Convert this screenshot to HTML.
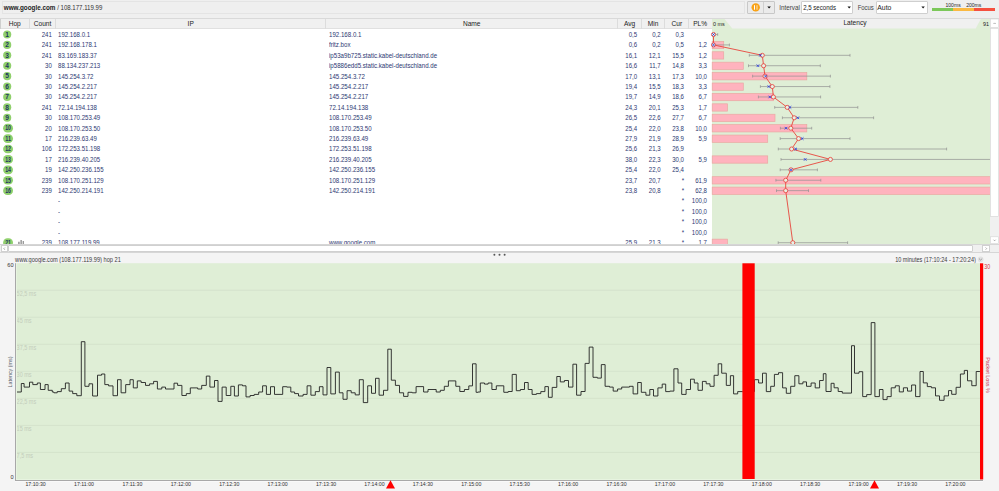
<!DOCTYPE html>
<html><head><meta charset="utf-8"><style>
*{margin:0;padding:0;box-sizing:border-box}
html,body{width:999px;height:491px;overflow:hidden;background:#f4f4f4;font-family:"Liberation Sans",sans-serif}
.a{position:absolute;white-space:nowrap}
.t{font-size:6.4px;color:#2c3872;line-height:10px}
.l{transform:scaleX(0.95);transform-origin:0 0}
.r{transform:scaleX(0.95);transform-origin:100% 0}
.h{font-size:6.6px;color:#222;line-height:10px}
</style></head>
<body>
<div class="a" style="left:0;top:0;width:999px;height:18px;background:#efefef"></div>
<div class="a" style="left:2.2px;top:1.3px;width:743px;height:12.3px;background:#efefef;border:1px solid #e4e4e4"></div>
<div class="a" style="left:747px;top:1.3px;width:28px;height:12.3px;background:#ebebeb;border:1px solid #c8c8c8;border-radius:1px"></div>
<div class="a" style="left:763px;top:1.8px;width:1px;height:11.3px;background:#d0d0d0"></div>
<svg class="a" style="left:0;top:0" width="999" height="18"><circle cx="755.7" cy="7.4" r="4.2" fill="#f9a215"/><rect x="754" y="5.2" width="1" height="4.5" fill="#fff"/><rect x="756.5" y="5.2" width="1" height="4.5" fill="#fbe3c0"/><path d="M767.3 6.4h3.6l-1.8 2.2z" fill="#111"/></svg>
<div class="a" style="left:801px;top:1.3px;width:52.4px;height:12.4px;background:#fff;border:1px solid #cfcfcf;border-radius:1px"></div>
<div class="a" style="left:875.5px;top:1.3px;width:52.5px;height:12.4px;background:#fff;border:1px solid #cfcfcf;border-radius:1px"></div>
<svg class="a" style="left:0;top:0" width="999" height="18"><path d="M847.5 6.4h3.4l-1.7 2.1z" fill="#111"/><path d="M921.4 6.4h3.4l-1.7 2.1z" fill="#111"/></svg>
<div class="a" style="left:932px;top:8px;width:21px;height:3px;background:#7cc85a"></div>
<div class="a" style="left:953px;top:8px;width:21px;height:3px;background:#fbb942"></div>
<div class="a" style="left:974px;top:8px;width:21px;height:3px;background:#f5503f"></div>
<div class="a" style="left:0;top:18.2px;width:999px;height:226.5px;background:#fff;border-top:1px solid #d9d9d9"></div>
<div class="a" style="left:0;top:19px;width:990px;height:9.6px;background:#f0f0f0;border-bottom:1px solid #e0e0e0"></div>
<div class="a" style="left:28.9px;top:19px;width:1px;height:9.6px;background:#dcdcdc"></div>
<div class="a" style="left:54.6px;top:19px;width:1px;height:9.6px;background:#dcdcdc"></div>
<div class="a" style="left:325.3px;top:19px;width:1px;height:9.6px;background:#dcdcdc"></div>
<div class="a" style="left:617.1px;top:19px;width:1px;height:9.6px;background:#dcdcdc"></div>
<div class="a" style="left:641.1px;top:19px;width:1px;height:9.6px;background:#dcdcdc"></div>
<div class="a" style="left:664.2px;top:19px;width:1px;height:9.6px;background:#dcdcdc"></div>
<div class="a" style="left:688.4px;top:19px;width:1px;height:9.6px;background:#dcdcdc"></div>
<div class="a" style="left:0;top:19px;width:1px;height:9.6px;background:#cfcfcf"></div>
<div class="a h" style="left:0px;top:18.8px;width:29.5px;text-align:center">Hop</div>
<div class="a h" style="left:29.5px;top:18.8px;width:26.1px;text-align:center">Count</div>
<div class="a h" style="left:55.6px;top:18.8px;width:270.2px;text-align:center">IP</div>
<div class="a h" style="left:325.8px;top:18.8px;width:291.8px;text-align:center">Name</div>
<div class="a h" style="left:617.6px;top:18.8px;width:24.0px;text-align:center">Avg</div>
<div class="a h" style="left:641.6px;top:18.8px;width:23.100000000000023px;text-align:center">Min</div>
<div class="a h" style="left:664.7px;top:18.8px;width:24.199999999999932px;text-align:center">Cur</div>
<div class="a h" style="left:688.9px;top:18.8px;width:22.600000000000023px;text-align:center">PL%</div>
<div class="a" style="left:711.8px;top:19px;width:278.2px;height:224.5px;background:#dfeed6"></div>
<svg class="a" style="left:0;top:0" width="999" height="30"><path d="M724.5 19H980.8L975.7 28.6H732.3Z" fill="#f0f0f0"/></svg>
<div class="a h" style="left:713px;top:19.4px;font-size:5.4px">0 ms</div>
<div class="a h" style="left:805px;top:18.3px;width:100px;text-align:center">Latency</div>
<div class="a h" style="left:983px;top:19.4px;font-size:5.4px">91</div>
<div class="a t r" style="left:0;top:29.90px;width:51.8px;text-align:right">241</div>
<div class="a t l" style="left:58.2px;top:29.90px">192.168.0.1</div>
<div class="a t l" style="left:328.9px;top:29.90px;transform:scaleX(0.96)">192.168.0.1</div>
<div class="a t r" style="left:600px;top:29.90px;width:37.2px;text-align:right">0,5</div>
<div class="a t r" style="left:620px;top:29.90px;width:40.6px;text-align:right">0,2</div>
<div class="a t r" style="left:640px;top:29.90px;width:44px;text-align:right">0,3</div>
<div class="a t r" style="left:660px;top:29.90px;width:47px;text-align:right"></div>
<div class="a t r" style="left:0;top:40.31px;width:51.8px;text-align:right">241</div>
<div class="a t l" style="left:58.2px;top:40.31px">192.168.178.1</div>
<div class="a t l" style="left:328.9px;top:40.31px;transform:scaleX(0.96)">fritz.box</div>
<div class="a t r" style="left:600px;top:40.31px;width:37.2px;text-align:right">0,6</div>
<div class="a t r" style="left:620px;top:40.31px;width:40.6px;text-align:right">0,2</div>
<div class="a t r" style="left:640px;top:40.31px;width:44px;text-align:right">0,5</div>
<div class="a t r" style="left:660px;top:40.31px;width:47px;text-align:right">1,2</div>
<div class="a t r" style="left:0;top:50.72px;width:51.8px;text-align:right">241</div>
<div class="a t l" style="left:58.2px;top:50.72px">83.169.183.37</div>
<div class="a t l" style="left:328.9px;top:50.72px;transform:scaleX(0.96)">ip53a9b725.static.kabel-deutschland.de</div>
<div class="a t r" style="left:600px;top:50.72px;width:37.2px;text-align:right">16,1</div>
<div class="a t r" style="left:620px;top:50.72px;width:40.6px;text-align:right">12,1</div>
<div class="a t r" style="left:640px;top:50.72px;width:44px;text-align:right">15,5</div>
<div class="a t r" style="left:660px;top:50.72px;width:47px;text-align:right">1,2</div>
<div class="a t r" style="left:0;top:61.13px;width:51.8px;text-align:right">30</div>
<div class="a t l" style="left:58.2px;top:61.13px">88.134.237.213</div>
<div class="a t l" style="left:328.9px;top:61.13px;transform:scaleX(0.96)">ip5886edd5.static.kabel-deutschland.de</div>
<div class="a t r" style="left:600px;top:61.13px;width:37.2px;text-align:right">16,6</div>
<div class="a t r" style="left:620px;top:61.13px;width:40.6px;text-align:right">11,7</div>
<div class="a t r" style="left:640px;top:61.13px;width:44px;text-align:right">14,8</div>
<div class="a t r" style="left:660px;top:61.13px;width:47px;text-align:right">3,3</div>
<div class="a t r" style="left:0;top:71.54px;width:51.8px;text-align:right">30</div>
<div class="a t l" style="left:58.2px;top:71.54px">145.254.3.72</div>
<div class="a t l" style="left:328.9px;top:71.54px;transform:scaleX(0.96)">145.254.3.72</div>
<div class="a t r" style="left:600px;top:71.54px;width:37.2px;text-align:right">17,0</div>
<div class="a t r" style="left:620px;top:71.54px;width:40.6px;text-align:right">13,1</div>
<div class="a t r" style="left:640px;top:71.54px;width:44px;text-align:right">17,3</div>
<div class="a t r" style="left:660px;top:71.54px;width:47px;text-align:right">10,0</div>
<div class="a t r" style="left:0;top:81.95px;width:51.8px;text-align:right">30</div>
<div class="a t l" style="left:58.2px;top:81.95px">145.254.2.217</div>
<div class="a t l" style="left:328.9px;top:81.95px;transform:scaleX(0.96)">145.254.2.217</div>
<div class="a t r" style="left:600px;top:81.95px;width:37.2px;text-align:right">19,4</div>
<div class="a t r" style="left:620px;top:81.95px;width:40.6px;text-align:right">15,5</div>
<div class="a t r" style="left:640px;top:81.95px;width:44px;text-align:right">18,3</div>
<div class="a t r" style="left:660px;top:81.95px;width:47px;text-align:right">3,3</div>
<div class="a t r" style="left:0;top:92.36px;width:51.8px;text-align:right">30</div>
<div class="a t l" style="left:58.2px;top:92.36px">145.254.2.217</div>
<div class="a t l" style="left:328.9px;top:92.36px;transform:scaleX(0.96)">145.254.2.217</div>
<div class="a t r" style="left:600px;top:92.36px;width:37.2px;text-align:right">19,7</div>
<div class="a t r" style="left:620px;top:92.36px;width:40.6px;text-align:right">14,9</div>
<div class="a t r" style="left:640px;top:92.36px;width:44px;text-align:right">18,6</div>
<div class="a t r" style="left:660px;top:92.36px;width:47px;text-align:right">6,7</div>
<div class="a t r" style="left:0;top:102.77px;width:51.8px;text-align:right">241</div>
<div class="a t l" style="left:58.2px;top:102.77px">72.14.194.138</div>
<div class="a t l" style="left:328.9px;top:102.77px;transform:scaleX(0.96)">72.14.194.138</div>
<div class="a t r" style="left:600px;top:102.77px;width:37.2px;text-align:right">24,3</div>
<div class="a t r" style="left:620px;top:102.77px;width:40.6px;text-align:right">20,1</div>
<div class="a t r" style="left:640px;top:102.77px;width:44px;text-align:right">25,3</div>
<div class="a t r" style="left:660px;top:102.77px;width:47px;text-align:right">1,7</div>
<div class="a t r" style="left:0;top:113.18px;width:51.8px;text-align:right">30</div>
<div class="a t l" style="left:58.2px;top:113.18px">108.170.253.49</div>
<div class="a t l" style="left:328.9px;top:113.18px;transform:scaleX(0.96)">108.170.253.49</div>
<div class="a t r" style="left:600px;top:113.18px;width:37.2px;text-align:right">26,5</div>
<div class="a t r" style="left:620px;top:113.18px;width:40.6px;text-align:right">22,6</div>
<div class="a t r" style="left:640px;top:113.18px;width:44px;text-align:right">27,7</div>
<div class="a t r" style="left:660px;top:113.18px;width:47px;text-align:right">6,7</div>
<div class="a t r" style="left:0;top:123.59px;width:51.8px;text-align:right">20</div>
<div class="a t l" style="left:58.2px;top:123.59px">108.170.253.50</div>
<div class="a t l" style="left:328.9px;top:123.59px;transform:scaleX(0.96)">108.170.253.50</div>
<div class="a t r" style="left:600px;top:123.59px;width:37.2px;text-align:right">25,4</div>
<div class="a t r" style="left:620px;top:123.59px;width:40.6px;text-align:right">22,0</div>
<div class="a t r" style="left:640px;top:123.59px;width:44px;text-align:right">23,8</div>
<div class="a t r" style="left:660px;top:123.59px;width:47px;text-align:right">10,0</div>
<div class="a t r" style="left:0;top:134.00px;width:51.8px;text-align:right">17</div>
<div class="a t l" style="left:58.2px;top:134.00px">216.239.63.49</div>
<div class="a t l" style="left:328.9px;top:134.00px;transform:scaleX(0.96)">216.239.63.49</div>
<div class="a t r" style="left:600px;top:134.00px;width:37.2px;text-align:right">27,9</div>
<div class="a t r" style="left:620px;top:134.00px;width:40.6px;text-align:right">21,9</div>
<div class="a t r" style="left:640px;top:134.00px;width:44px;text-align:right">28,9</div>
<div class="a t r" style="left:660px;top:134.00px;width:47px;text-align:right">5,9</div>
<div class="a t r" style="left:0;top:144.41px;width:51.8px;text-align:right">106</div>
<div class="a t l" style="left:58.2px;top:144.41px">172.253.51.198</div>
<div class="a t l" style="left:328.9px;top:144.41px;transform:scaleX(0.96)">172.253.51.198</div>
<div class="a t r" style="left:600px;top:144.41px;width:37.2px;text-align:right">25,6</div>
<div class="a t r" style="left:620px;top:144.41px;width:40.6px;text-align:right">21,3</div>
<div class="a t r" style="left:640px;top:144.41px;width:44px;text-align:right">26,9</div>
<div class="a t r" style="left:660px;top:144.41px;width:47px;text-align:right"></div>
<div class="a t r" style="left:0;top:154.82px;width:51.8px;text-align:right">17</div>
<div class="a t l" style="left:58.2px;top:154.82px">216.239.40.205</div>
<div class="a t l" style="left:328.9px;top:154.82px;transform:scaleX(0.96)">216.239.40.205</div>
<div class="a t r" style="left:600px;top:154.82px;width:37.2px;text-align:right">38,0</div>
<div class="a t r" style="left:620px;top:154.82px;width:40.6px;text-align:right">22,3</div>
<div class="a t r" style="left:640px;top:154.82px;width:44px;text-align:right">30,0</div>
<div class="a t r" style="left:660px;top:154.82px;width:47px;text-align:right">5,9</div>
<div class="a t r" style="left:0;top:165.23px;width:51.8px;text-align:right">19</div>
<div class="a t l" style="left:58.2px;top:165.23px">142.250.236.155</div>
<div class="a t l" style="left:328.9px;top:165.23px;transform:scaleX(0.96)">142.250.236.155</div>
<div class="a t r" style="left:600px;top:165.23px;width:37.2px;text-align:right">25,4</div>
<div class="a t r" style="left:620px;top:165.23px;width:40.6px;text-align:right">22,0</div>
<div class="a t r" style="left:640px;top:165.23px;width:44px;text-align:right">25,4</div>
<div class="a t r" style="left:660px;top:165.23px;width:47px;text-align:right"></div>
<div class="a t r" style="left:0;top:175.64px;width:51.8px;text-align:right">239</div>
<div class="a t l" style="left:58.2px;top:175.64px">108.170.251.129</div>
<div class="a t l" style="left:328.9px;top:175.64px;transform:scaleX(0.96)">108.170.251.129</div>
<div class="a t r" style="left:600px;top:175.64px;width:37.2px;text-align:right">23,7</div>
<div class="a t r" style="left:620px;top:175.64px;width:40.6px;text-align:right">20,7</div>
<div class="a t r" style="left:640px;top:175.64px;width:44px;text-align:right">*</div>
<div class="a t r" style="left:660px;top:175.64px;width:47px;text-align:right">61,9</div>
<div class="a t r" style="left:0;top:186.05px;width:51.8px;text-align:right">239</div>
<div class="a t l" style="left:58.2px;top:186.05px">142.250.214.191</div>
<div class="a t l" style="left:328.9px;top:186.05px;transform:scaleX(0.96)">142.250.214.191</div>
<div class="a t r" style="left:600px;top:186.05px;width:37.2px;text-align:right">23,8</div>
<div class="a t r" style="left:620px;top:186.05px;width:40.6px;text-align:right">20,8</div>
<div class="a t r" style="left:640px;top:186.05px;width:44px;text-align:right">*</div>
<div class="a t r" style="left:660px;top:186.05px;width:47px;text-align:right">62,8</div>
<div class="a t r" style="left:0;top:196.46px;width:51.8px;text-align:right"></div>
<div class="a t l" style="left:58.2px;top:196.46px">-</div>
<div class="a t l" style="left:328.9px;top:196.46px;transform:scaleX(0.96)"></div>
<div class="a t r" style="left:600px;top:196.46px;width:37.2px;text-align:right"></div>
<div class="a t r" style="left:620px;top:196.46px;width:40.6px;text-align:right"></div>
<div class="a t r" style="left:640px;top:196.46px;width:44px;text-align:right">*</div>
<div class="a t r" style="left:660px;top:196.46px;width:47px;text-align:right">100,0</div>
<div class="a t r" style="left:0;top:206.87px;width:51.8px;text-align:right"></div>
<div class="a t l" style="left:58.2px;top:206.87px">-</div>
<div class="a t l" style="left:328.9px;top:206.87px;transform:scaleX(0.96)"></div>
<div class="a t r" style="left:600px;top:206.87px;width:37.2px;text-align:right"></div>
<div class="a t r" style="left:620px;top:206.87px;width:40.6px;text-align:right"></div>
<div class="a t r" style="left:640px;top:206.87px;width:44px;text-align:right">*</div>
<div class="a t r" style="left:660px;top:206.87px;width:47px;text-align:right">100,0</div>
<div class="a t r" style="left:0;top:217.28px;width:51.8px;text-align:right"></div>
<div class="a t l" style="left:58.2px;top:217.28px">-</div>
<div class="a t l" style="left:328.9px;top:217.28px;transform:scaleX(0.96)"></div>
<div class="a t r" style="left:600px;top:217.28px;width:37.2px;text-align:right"></div>
<div class="a t r" style="left:620px;top:217.28px;width:40.6px;text-align:right"></div>
<div class="a t r" style="left:640px;top:217.28px;width:44px;text-align:right">*</div>
<div class="a t r" style="left:660px;top:217.28px;width:47px;text-align:right">100,0</div>
<div class="a t r" style="left:0;top:227.69px;width:51.8px;text-align:right"></div>
<div class="a t l" style="left:58.2px;top:227.69px">-</div>
<div class="a t l" style="left:328.9px;top:227.69px;transform:scaleX(0.96)"></div>
<div class="a t r" style="left:600px;top:227.69px;width:37.2px;text-align:right"></div>
<div class="a t r" style="left:620px;top:227.69px;width:40.6px;text-align:right"></div>
<div class="a t r" style="left:640px;top:227.69px;width:44px;text-align:right">*</div>
<div class="a t r" style="left:660px;top:227.69px;width:47px;text-align:right">100,0</div>
<div class="a t r" style="left:0;top:238.10px;width:51.8px;text-align:right">239</div>
<div class="a t l" style="left:58.2px;top:238.10px">108.177.119.99</div>
<div class="a t l" style="left:328.9px;top:238.10px;transform:scaleX(0.96)">www.google.com</div>
<div class="a t r" style="left:600px;top:238.10px;width:37.2px;text-align:right">25,9</div>
<div class="a t r" style="left:620px;top:238.10px;width:40.6px;text-align:right">21,3</div>
<div class="a t r" style="left:640px;top:238.10px;width:44px;text-align:right">*</div>
<div class="a t r" style="left:660px;top:238.10px;width:47px;text-align:right">1,7</div>
<svg class="a" style="left:0;top:0" width="999" height="245" font-family="Liberation Sans"><defs><clipPath id="tc"><rect x="0" y="28.6" width="999" height="215.9"/></clipPath></defs><g clip-path="url(#tc)"><circle cx="7.2" cy="34.50" r="4.05" fill="#90d06c"/><text x="7.2" y="36.80" font-size="6.6" font-weight="bold" text-anchor="middle" fill="#1e3560">1</text><circle cx="7.2" cy="44.91" r="4.05" fill="#90d06c"/><text x="7.2" y="47.21" font-size="6.6" font-weight="bold" text-anchor="middle" fill="#1e3560">2</text><circle cx="7.2" cy="55.32" r="4.05" fill="#90d06c"/><text x="7.2" y="57.62" font-size="6.6" font-weight="bold" text-anchor="middle" fill="#1e3560">3</text><circle cx="7.2" cy="65.73" r="4.05" fill="#90d06c"/><text x="7.2" y="68.03" font-size="6.6" font-weight="bold" text-anchor="middle" fill="#1e3560">4</text><circle cx="7.2" cy="76.14" r="4.05" fill="#90d06c"/><text x="7.2" y="78.44" font-size="6.6" font-weight="bold" text-anchor="middle" fill="#1e3560">5</text><circle cx="7.2" cy="86.55" r="4.05" fill="#90d06c"/><text x="7.2" y="88.85" font-size="6.6" font-weight="bold" text-anchor="middle" fill="#1e3560">6</text><circle cx="7.2" cy="96.96" r="4.05" fill="#90d06c"/><text x="7.2" y="99.26" font-size="6.6" font-weight="bold" text-anchor="middle" fill="#1e3560">7</text><circle cx="7.2" cy="107.37" r="4.05" fill="#90d06c"/><text x="7.2" y="109.67" font-size="6.6" font-weight="bold" text-anchor="middle" fill="#1e3560">8</text><circle cx="7.2" cy="117.78" r="4.05" fill="#90d06c"/><text x="7.2" y="120.08" font-size="6.6" font-weight="bold" text-anchor="middle" fill="#1e3560">9</text><rect x="3.1" y="123.84" width="9.9" height="8.7" rx="4.35" fill="#90d06c"/><text x="8.05" y="130.49" font-size="6.6" font-weight="bold" text-anchor="middle" fill="#1e3560" textLength="5.8" lengthAdjust="spacingAndGlyphs">10</text><rect x="3.1" y="134.25" width="9.9" height="8.7" rx="4.35" fill="#90d06c"/><text x="8.05" y="140.90" font-size="6.6" font-weight="bold" text-anchor="middle" fill="#1e3560" textLength="5.8" lengthAdjust="spacingAndGlyphs">11</text><rect x="3.1" y="144.66" width="9.9" height="8.7" rx="4.35" fill="#90d06c"/><text x="8.05" y="151.31" font-size="6.6" font-weight="bold" text-anchor="middle" fill="#1e3560" textLength="5.8" lengthAdjust="spacingAndGlyphs">12</text><rect x="3.1" y="155.07" width="9.9" height="8.7" rx="4.35" fill="#90d06c"/><text x="8.05" y="161.72" font-size="6.6" font-weight="bold" text-anchor="middle" fill="#1e3560" textLength="5.8" lengthAdjust="spacingAndGlyphs">13</text><rect x="3.1" y="165.48" width="9.9" height="8.7" rx="4.35" fill="#90d06c"/><text x="8.05" y="172.13" font-size="6.6" font-weight="bold" text-anchor="middle" fill="#1e3560" textLength="5.8" lengthAdjust="spacingAndGlyphs">14</text><rect x="3.1" y="175.89" width="9.9" height="8.7" rx="4.35" fill="#90d06c"/><text x="8.05" y="182.54" font-size="6.6" font-weight="bold" text-anchor="middle" fill="#1e3560" textLength="5.8" lengthAdjust="spacingAndGlyphs">15</text><rect x="3.1" y="186.30" width="9.9" height="8.7" rx="4.35" fill="#90d06c"/><text x="8.05" y="192.95" font-size="6.6" font-weight="bold" text-anchor="middle" fill="#1e3560" textLength="5.8" lengthAdjust="spacingAndGlyphs">16</text><rect x="3.1" y="238.35" width="9.9" height="8.7" rx="4.35" fill="#90d06c"/><text x="8.05" y="245.00" font-size="6.6" font-weight="bold" text-anchor="middle" fill="#1e3560" textLength="5.8" lengthAdjust="spacingAndGlyphs">21</text><rect x="712.2" y="41.36" width="11.50" height="7.3" fill="#ffb3be" stroke="#eaa8a2" stroke-width="0.7"/><rect x="712.2" y="51.77" width="11.50" height="7.3" fill="#ffb3be" stroke="#eaa8a2" stroke-width="0.7"/><rect x="712.2" y="62.18" width="31.10" height="7.3" fill="#ffb3be" stroke="#eaa8a2" stroke-width="0.7"/><rect x="712.2" y="72.59" width="94.60" height="7.3" fill="#ffb3be" stroke="#eaa8a2" stroke-width="0.7"/><rect x="712.2" y="83.00" width="31.10" height="7.3" fill="#ffb3be" stroke="#eaa8a2" stroke-width="0.7"/><rect x="712.2" y="93.41" width="61.20" height="7.3" fill="#ffb3be" stroke="#eaa8a2" stroke-width="0.7"/><rect x="712.2" y="103.82" width="15.30" height="7.3" fill="#ffb3be" stroke="#eaa8a2" stroke-width="0.7"/><rect x="712.2" y="114.23" width="62.80" height="7.3" fill="#ffb3be" stroke="#eaa8a2" stroke-width="0.7"/><rect x="712.2" y="124.64" width="94.60" height="7.3" fill="#ffb3be" stroke="#eaa8a2" stroke-width="0.7"/><rect x="712.2" y="135.05" width="55.50" height="7.3" fill="#ffb3be" stroke="#eaa8a2" stroke-width="0.7"/><rect x="712.2" y="155.87" width="55.50" height="7.3" fill="#ffb3be" stroke="#eaa8a2" stroke-width="0.7"/><rect x="712.2" y="176.69" width="282.80" height="7.3" fill="#ffb3be" stroke="#eaa8a2" stroke-width="0.7"/><rect x="712.2" y="187.10" width="282.80" height="7.3" fill="#ffb3be" stroke="#eaa8a2" stroke-width="0.7"/><rect x="712.2" y="239.15" width="15.20" height="7.3" fill="#ffb3be" stroke="#eaa8a2" stroke-width="0.7"/><path d="M713.0 34.50H717.7M713.0 33.10V35.90M717.7 33.10V35.90" stroke="#909090" stroke-width="0.7" fill="none"/><path d="M713.0 44.91H729.4M713.0 43.51V46.31M729.4 43.51V46.31" stroke="#909090" stroke-width="0.7" fill="none"/><path d="M749.3 55.32H850.0M749.3 53.92V56.72M850.0 53.92V56.72" stroke="#909090" stroke-width="0.7" fill="none"/><path d="M748.5 65.73H820.3M748.5 64.33V67.13M820.3 64.33V67.13" stroke="#909090" stroke-width="0.7" fill="none"/><path d="M752.6 76.14H830.4M752.6 74.74V77.54M830.4 74.74V77.54" stroke="#909090" stroke-width="0.7" fill="none"/><path d="M760.4 86.55H829.9M760.4 85.15V87.95M829.9 85.15V87.95" stroke="#909090" stroke-width="0.7" fill="none"/><path d="M758.4 96.96H820.6M758.4 95.56V98.36M820.6 95.56V98.36" stroke="#909090" stroke-width="0.7" fill="none"/><path d="M774.7 107.37H857.8M774.7 105.97V108.77M857.8 105.97V108.77" stroke="#909090" stroke-width="0.7" fill="none"/><path d="M782.4 117.78H873.6M782.4 116.38V119.18M873.6 116.38V119.18" stroke="#909090" stroke-width="0.7" fill="none"/><path d="M780.4 128.19H811.7M780.4 126.79V129.59M811.7 126.79V129.59" stroke="#909090" stroke-width="0.7" fill="none"/><path d="M780.2 138.60H850.0M780.2 137.20V140.00M850.0 137.20V140.00" stroke="#909090" stroke-width="0.7" fill="none"/><path d="M778.3 149.01H946.6M778.3 147.61V150.41M946.6 147.61V150.41" stroke="#909090" stroke-width="0.7" fill="none"/><path d="M781.0 159.42H995.0M781.0 158.02V160.82M995.0 158.02V160.82" stroke="#909090" stroke-width="0.7" fill="none"/><path d="M780.2 169.83H817.4M780.2 168.43V171.23M817.4 168.43V171.23" stroke="#909090" stroke-width="0.7" fill="none"/><path d="M775.9 180.24H820.8M775.9 178.84V181.64M820.8 178.84V181.64" stroke="#909090" stroke-width="0.7" fill="none"/><path d="M776.5 190.65H808.5M776.5 189.25V192.05M808.5 189.25V192.05" stroke="#909090" stroke-width="0.7" fill="none"/><path d="M778.2 242.70H847.6M778.2 241.30V244.10M847.6 241.30V244.10" stroke="#909090" stroke-width="0.7" fill="none"/><polyline points="713.5,34.50 713.5,44.91 762.3,55.32 763.6,65.73 765.0,76.14 772.3,86.55 773.4,96.96 787.2,107.37 794.2,117.78 790.8,128.19 798.6,138.60 791.6,149.01 830.4,159.42 791.0,169.83 785.7,180.24 785.7,190.65 792.8,242.70" fill="none" stroke="#e8453c" stroke-width="0.9"/><circle cx="713.5" cy="34.50" r="2.05" fill="#e9f1e4" stroke="#e8453c" stroke-width="0.85"/><circle cx="713.5" cy="44.91" r="2.05" fill="#e9f1e4" stroke="#e8453c" stroke-width="0.85"/><circle cx="762.3" cy="55.32" r="2.05" fill="#e9f1e4" stroke="#e8453c" stroke-width="0.85"/><circle cx="763.6" cy="65.73" r="2.05" fill="#e9f1e4" stroke="#e8453c" stroke-width="0.85"/><circle cx="765.0" cy="76.14" r="2.05" fill="#e9f1e4" stroke="#e8453c" stroke-width="0.85"/><circle cx="772.3" cy="86.55" r="2.05" fill="#e9f1e4" stroke="#e8453c" stroke-width="0.85"/><circle cx="773.4" cy="96.96" r="2.05" fill="#e9f1e4" stroke="#e8453c" stroke-width="0.85"/><circle cx="787.2" cy="107.37" r="2.05" fill="#e9f1e4" stroke="#e8453c" stroke-width="0.85"/><circle cx="794.2" cy="117.78" r="2.05" fill="#e9f1e4" stroke="#e8453c" stroke-width="0.85"/><circle cx="790.8" cy="128.19" r="2.05" fill="#e9f1e4" stroke="#e8453c" stroke-width="0.85"/><circle cx="798.6" cy="138.60" r="2.05" fill="#e9f1e4" stroke="#e8453c" stroke-width="0.85"/><circle cx="791.6" cy="149.01" r="2.05" fill="#e9f1e4" stroke="#e8453c" stroke-width="0.85"/><circle cx="830.4" cy="159.42" r="2.05" fill="#e9f1e4" stroke="#e8453c" stroke-width="0.85"/><circle cx="791.0" cy="169.83" r="2.05" fill="#e9f1e4" stroke="#e8453c" stroke-width="0.85"/><circle cx="785.7" cy="180.24" r="2.05" fill="#e9f1e4" stroke="#e8453c" stroke-width="0.85"/><circle cx="785.7" cy="190.65" r="2.05" fill="#e9f1e4" stroke="#e8453c" stroke-width="0.85"/><circle cx="792.8" cy="242.70" r="2.05" fill="#e9f1e4" stroke="#e8453c" stroke-width="0.85"/><path d="M712.2 33.20l2.6 2.6M712.2 35.80l2.6 -2.6" stroke="#1a2ee0" stroke-width="0.75"/><path d="M712.2 43.61l2.6 2.6M712.2 46.21l2.6 -2.6" stroke="#1a2ee0" stroke-width="0.75"/><path d="M759.1 54.02l2.6 2.6M759.1 56.62l2.6 -2.6" stroke="#1a2ee0" stroke-width="0.75"/><path d="M756.6 64.43l2.6 2.6M756.6 67.03l2.6 -2.6" stroke="#1a2ee0" stroke-width="0.75"/><path d="M764.3000000000001 74.84l2.6 2.6M764.3000000000001 77.44l2.6 -2.6" stroke="#1a2ee0" stroke-width="0.75"/><path d="M767.5 85.25l2.6 2.6M767.5 87.85l2.6 -2.6" stroke="#1a2ee0" stroke-width="0.75"/><path d="M768.5 95.66l2.6 2.6M768.5 98.26l2.6 -2.6" stroke="#1a2ee0" stroke-width="0.75"/><path d="M788.7 106.07l2.6 2.6M788.7 108.67l2.6 -2.6" stroke="#1a2ee0" stroke-width="0.75"/><path d="M796.5 116.48l2.6 2.6M796.5 119.08l2.6 -2.6" stroke="#1a2ee0" stroke-width="0.75"/><path d="M784.7 126.89l2.6 2.6M784.7 129.49l2.6 -2.6" stroke="#1a2ee0" stroke-width="0.75"/><path d="M800.9000000000001 137.30l2.6 2.6M800.9000000000001 139.90l2.6 -2.6" stroke="#1a2ee0" stroke-width="0.75"/><path d="M794.4000000000001 147.71l2.6 2.6M794.4000000000001 150.31l2.6 -2.6" stroke="#1a2ee0" stroke-width="0.75"/><path d="M803.9000000000001 158.12l2.6 2.6M803.9000000000001 160.72l2.6 -2.6" stroke="#1a2ee0" stroke-width="0.75"/><path d="M789.7 168.53l2.6 2.6M789.7 171.13l2.6 -2.6" stroke="#1a2ee0" stroke-width="0.75"/><path d="M18.1 244.2V241.8H19.7V244.2ZM20.4 244.2V240H21.9V244.2ZM22.6 244.2V241H24V244.2Z" fill="#9a9a9a"/></g><rect x="990" y="19" width="9" height="226" fill="#f0f0f0"/><rect x="990.6" y="19" width="8" height="8.3" fill="#fff" stroke="#d4d4d4" stroke-width="0.6"/><rect x="990.6" y="28.3" width="8" height="188" fill="#fff" stroke="#d4d4d4" stroke-width="0.6"/><rect x="990.6" y="236.8" width="8" height="6.7" fill="#fff" stroke="#d4d4d4" stroke-width="0.6"/><path d="M993.5 24l1.1-1.1 1.1 1.1" stroke="#777" stroke-width="0.6" fill="none"/><path d="M993.5 239.7l1.1 1.1 1.1-1.1" stroke="#777" stroke-width="0.6" fill="none"/></svg>
<div class="a" style="left:0;top:243.8px;width:999px;height:9.2px;background:#f0f0f0;border-top:1px solid #d6d6d6;border-bottom:1px solid #d6d6d6"></div>
<div class="a" style="left:0.5px;top:245.3px;width:7px;height:7px;background:#fff;border:1px solid #d0d0d0"></div>
<div class="a" style="left:8px;top:245.3px;width:964.5px;height:7px;background:#fff;border:1px solid #d0d0d0;border-radius:1px"></div>
<div class="a" style="left:981.8px;top:245.3px;width:8.2px;height:7px;background:#fff;border:1px solid #d0d0d0"></div>
<svg class="a" style="left:0;top:244" width="999" height="10"><path d="M4.9 5.8l-1.1-1.1 1.1-1.1" stroke="#777" stroke-width="0.6" fill="none"/><path d="M985.6 3.5l1.1 1.1-1.1 1.1" stroke="#777" stroke-width="0.6" fill="none"/></svg>
<svg class="a" style="left:0;top:250" width="999" height="10"><circle cx="494.4" cy="4.8" r="1" fill="#555"/><circle cx="499.5" cy="4.8" r="1" fill="#555"/><circle cx="504.6" cy="4.8" r="1" fill="#555"/></svg>
<svg class="a" style="left:970px;top:250px" width="20" height="14"><circle cx="10.6" cy="9.3" r="2.9" fill="#e2e2e2"/><path d="M9 8.6l1.6 1.5 1.6-1.5" stroke="#777" stroke-width="0.6" fill="none"/></svg>
<svg class="a" style="left:0;top:0" width="999" height="491" font-family="Liberation Sans"><text x="3.75" y="9.60" font-size="6.8" fill="#222" font-weight="bold" textLength="51.70" lengthAdjust="spacingAndGlyphs">www.google.com</text><text x="57.15" y="9.60" font-size="6.8" fill="#333" font-weight="normal" textLength="45.20" lengthAdjust="spacingAndGlyphs">/ 108.177.119.99</text><text x="779.15" y="9.50" font-size="6.8" fill="#444" font-weight="normal" textLength="20.70" lengthAdjust="spacingAndGlyphs">Interval</text><text x="803.15" y="9.90" font-size="6.8" fill="#222" font-weight="normal" textLength="32.80" lengthAdjust="spacingAndGlyphs">2,5 seconds</text><text x="857.65" y="9.50" font-size="6.8" fill="#444" font-weight="normal" textLength="16.20" lengthAdjust="spacingAndGlyphs">Focus</text><text x="877.25" y="9.90" font-size="6.8" fill="#222" font-weight="normal" textLength="14.10" lengthAdjust="spacingAndGlyphs">Auto</text><text x="945.45" y="6.70" font-size="5.3" fill="#2a2a2a" font-weight="normal" textLength="15.30" lengthAdjust="spacingAndGlyphs">100ms</text><text x="966.15" y="6.70" font-size="5.3" fill="#2a2a2a" font-weight="normal" textLength="15.20" lengthAdjust="spacingAndGlyphs">200ms</text><text x="15.05" y="261.90" font-size="6.4" fill="#3a3a3a" font-weight="normal" textLength="105.80" lengthAdjust="spacingAndGlyphs">www.google.com (108.177.119.99) hop 21</text><text x="895.15" y="261.90" font-size="6.4" fill="#3a3a3a" font-weight="normal" textLength="80.70" lengthAdjust="spacingAndGlyphs">10 minutes (17:10:24 - 17:20:24)</text></svg>
<svg class="a" style="left:0;top:0" width="999" height="491" font-family="Liberation Sans">
<rect x="16.0" y="263.2" width="964.0" height="216.8" fill="#dfeed6"/>
<line x1="16.0" y1="452.46" x2="980.0" y2="452.46" stroke="#cfdcc6" stroke-width="0.6"/>
<line x1="16.0" y1="425.43" x2="980.0" y2="425.43" stroke="#cfdcc6" stroke-width="0.6"/>
<line x1="16.0" y1="398.39" x2="980.0" y2="398.39" stroke="#cfdcc6" stroke-width="0.6"/>
<line x1="16.0" y1="371.35" x2="980.0" y2="371.35" stroke="#cfdcc6" stroke-width="0.6"/>
<line x1="16.0" y1="344.31" x2="980.0" y2="344.31" stroke="#cfdcc6" stroke-width="0.6"/>
<line x1="16.0" y1="317.27" x2="980.0" y2="317.27" stroke="#cfdcc6" stroke-width="0.6"/>
<line x1="16.0" y1="290.24" x2="980.0" y2="290.24" stroke="#cfdcc6" stroke-width="0.6"/>
<text transform="translate(16.6,458.06) scale(0.86,1)" font-size="6.4" fill="#c3cdbb">7,5 ms</text>
<text transform="translate(16.6,431.03) scale(0.86,1)" font-size="6.4" fill="#c3cdbb">15 ms</text>
<text transform="translate(16.6,403.99) scale(0.86,1)" font-size="6.4" fill="#c3cdbb">22,5 ms</text>
<text transform="translate(16.6,376.95) scale(0.86,1)" font-size="6.4" fill="#c3cdbb">30 ms</text>
<text transform="translate(16.6,349.91) scale(0.86,1)" font-size="6.4" fill="#c3cdbb">37,5 ms</text>
<text transform="translate(16.6,322.88) scale(0.86,1)" font-size="6.4" fill="#c3cdbb">45 ms</text>
<text transform="translate(16.6,295.84) scale(0.86,1)" font-size="6.4" fill="#c3cdbb">52,5 ms</text>
<path d="M16 392.0H21.3V383.5H24.1V387.1H29.5V382.2H32.8V384.6H37.3V383.0H40.4V389.5H45.0V384.6H48.2V390.3H52.3V392.0H53.9V392.8H57.2V391.6H61.3V388.7H65.4V383.0H69.1V391.1H72.7V393.6H76.8V395.7H81.3V341.7H84.9V386.3H89.0V383.8H92.6V396.0H97.5V375.2H101.6V374.0H104.8V384.6H108.6V385.9H113.0V395.7H117.5V379.7H121.1V392.8H125.7V384.6H130.0V379.7H133.3V387.9H137.3V380.9H141.1V382.5H145.5V385.4H149.6V383.8H153.6V381.4H157.4V389.0H161.8V387.1H165.5V389.0H174.0V383.2H177.6V385.4H181.9V395.5H186.3V393.6H190.3V387.9H197.7V389.0H201.7V385.4H206.3V376.1H209.9V387.1H214.5V380.5H218.0V401.4H222.1V387.1H226.2V395.5H230.8V386.3H234.4V396.0H238.4V384.9H242.5V385.8H246.0V396.9H250.1V395.5H254.2V394.4H258.7V392.0H262.6V385.8H266.4V394.4H270.5V386.7H274.5V394.4H282.7V386.7H286.8V387.1H290.8V392.0H294.6V393.6H298.5V396.0H303.1V394.4H307.1V385.8H310.9V395.2H315.3V391.6H319.4V386.7H323.0V394.9H327.0V367.5H330.8V393.9H335.4V372.1H339.3V392.8H343.0V399.3H347.1V390.7H351.2V392.8H355.2V394.9H359.3V379.7H363.3V402.6H367.7V385.8H371.5V393.3H375.5V378.3H379.1V395.2H383.5V390.3H387.8V349.2H391.3V380.2H395.4V385.4H399.5V392.8H403.6V396.4H408.0V392.3H412.2V392.8H416.1V386.6H423.6V392.0H428.0V389.5H436.2V392.0H440.3V390.3H444.3V386.3H448.4V380.9H455.8V386.3H459.8V391.5H464.4V389.5H468.8V385.9H472.5V363.8H476.1V392.3H478.0V392.0H480.3V383.0H484.5V384.1H488.1V383.0H491.9V389.5H496.3V385.8H503.8V392.3H508.2V391.5H512.2V374.4H516.3V390.7H520.4V389.5H524.5V382.5H528.2V389.5H532.1V394.4H536.4V393.6H540.8V391.6H544.9V386.6H548.4V397.3H552.2V387.4H556.8V376.5H560.3V381.9H564.4V380.5H568.5V387.1H572.9V364.2H576.6V395.2H581.0V391.5H585.1V363.4H589.2V347.1H593.0V377.3H594.0V377.3H597.3V378.1H601.3V364.6H605.1V386.3H609.5V387.1H613.2V391.1H617.6V389.0H621.7V387.1H629.5V386.3H633.1V393.9H637.7V382.5H641.3V392.3H645.9V395.2H649.8V389.5H653.5V396.0H657.9V387.9H662.2V384.1H665.7V391.6H669.8V391.1H673.9V368.8H678.0V383.0H681.7V394.4H686.1V389.5H690.5V379.2H694.3V383.0H698.0V390.3H702.4V381.4H706.2V383.8H710.0V386.3H714.1V375.3H718.2V363.8H721.7V373.2H726.3V385.4H730.4V375.7H733.6V393.9H737.7V391.6H742.6V391.6H754.4V379.7H758.6V383.0H762.5V373.2H766.3V391.6H770.7V386.3H774.4V374.4H778.5V372.7H782.6V387.9H786.3V393.3H790.7V386.3H794.8V375.7H798.9V383.8H802.9V381.9H806.5V386.3H811.1V383.0H815.2V387.9H819.6V380.5H823.3V373.7H826.0V391.5H831.1V383.3H834.1V387.8H838.2V391.5H842.3V393.1H851.5V345.7H854.5V373.2H859.0V371.7H862.7V396.6H866.7V394.6H871.2V322.6H874.9V396.6H879.4V389.5H883.0V399.6H887.1V396.6H891.2V387.8H895.3V385.8H899.3V391.9H903.4V387.8H907.5V391.1H911.6V385.0H915.6V396.6H920.0V371.5H923.3V382.9H927.3V386.6H931.4V387.8H935.5V395.9H939.5V400.3H944.1V395.9H948.5V390.6H951.7V394.3H956.1V387.3H960.4V374.0H964.3V370.4H967.5V380.8H971.8V385.7H976.2V371.5H979.9V371.5H980" fill="none" stroke="#222" stroke-width="0.9"/>
<rect x="742.4" y="263.3" width="12.3" height="216.2" fill="#ff0000"/>
<rect x="980" y="263.3" width="3.2" height="216.2" fill="#ff0000"/>
<rect x="16" y="263.2" width="1" height="216.8" fill="#e7f4e0"/><rect x="16" y="479" width="964" height="1" fill="#e7f4e0"/>
<rect x="15" y="263.2" width="1" height="217.8" fill="#a8a8a8"/>
<rect x="15" y="480" width="968" height="1" fill="#a8a8a8"/><rect x="15" y="481" width="968" height="1" fill="#f9f9f9"/>
<text x="13.5" y="267" font-size="5.6" text-anchor="end" fill="#333">60</text>
<text x="13.5" y="478.5" font-size="5.6" text-anchor="end" fill="#333">0</text>
<text x="984.2" y="268.6" font-size="6.3" fill="#d8303a" textLength="5.9" lengthAdjust="spacingAndGlyphs">30</text>
<text transform="translate(12,372) rotate(-90)" font-size="5.4" text-anchor="middle" fill="#5a5f6a">Latency (ms)</text>
<text transform="translate(986,375) rotate(90)" font-size="5.4" text-anchor="middle" fill="#c8304a">Packet Loss %</text>
<text x="35.60" y="485.5" font-size="5.2" text-anchor="middle" fill="#333">17:10:30</text>
<text x="84.01" y="485.5" font-size="5.2" text-anchor="middle" fill="#333">17:11:00</text>
<text x="132.42" y="485.5" font-size="5.2" text-anchor="middle" fill="#333">17:11:30</text>
<text x="180.83" y="485.5" font-size="5.2" text-anchor="middle" fill="#333">17:12:00</text>
<text x="229.24" y="485.5" font-size="5.2" text-anchor="middle" fill="#333">17:12:30</text>
<text x="277.65" y="485.5" font-size="5.2" text-anchor="middle" fill="#333">17:13:00</text>
<text x="326.06" y="485.5" font-size="5.2" text-anchor="middle" fill="#333">17:13:30</text>
<text x="374.47" y="485.5" font-size="5.2" text-anchor="middle" fill="#333">17:14:00</text>
<text x="422.88" y="485.5" font-size="5.2" text-anchor="middle" fill="#333">17:14:30</text>
<text x="471.29" y="485.5" font-size="5.2" text-anchor="middle" fill="#333">17:15:00</text>
<text x="519.70" y="485.5" font-size="5.2" text-anchor="middle" fill="#333">17:15:30</text>
<text x="568.11" y="485.5" font-size="5.2" text-anchor="middle" fill="#333">17:16:00</text>
<text x="616.52" y="485.5" font-size="5.2" text-anchor="middle" fill="#333">17:16:30</text>
<text x="664.93" y="485.5" font-size="5.2" text-anchor="middle" fill="#333">17:17:00</text>
<text x="713.34" y="485.5" font-size="5.2" text-anchor="middle" fill="#333">17:17:30</text>
<text x="761.75" y="485.5" font-size="5.2" text-anchor="middle" fill="#333">17:18:00</text>
<text x="810.16" y="485.5" font-size="5.2" text-anchor="middle" fill="#333">17:18:30</text>
<text x="858.57" y="485.5" font-size="5.2" text-anchor="middle" fill="#333">17:19:00</text>
<text x="906.98" y="485.5" font-size="5.2" text-anchor="middle" fill="#333">17:19:30</text>
<text x="955.39" y="485.5" font-size="5.2" text-anchor="middle" fill="#333">17:20:00</text>
<path d="M386.0 488.5L390.5 480.3L395.0 488.5Z" fill="#ff0000"/>
<path d="M870.0 488.5L874.5 480.3L879.0 488.5Z" fill="#ff0000"/>
</svg>
</body></html>
